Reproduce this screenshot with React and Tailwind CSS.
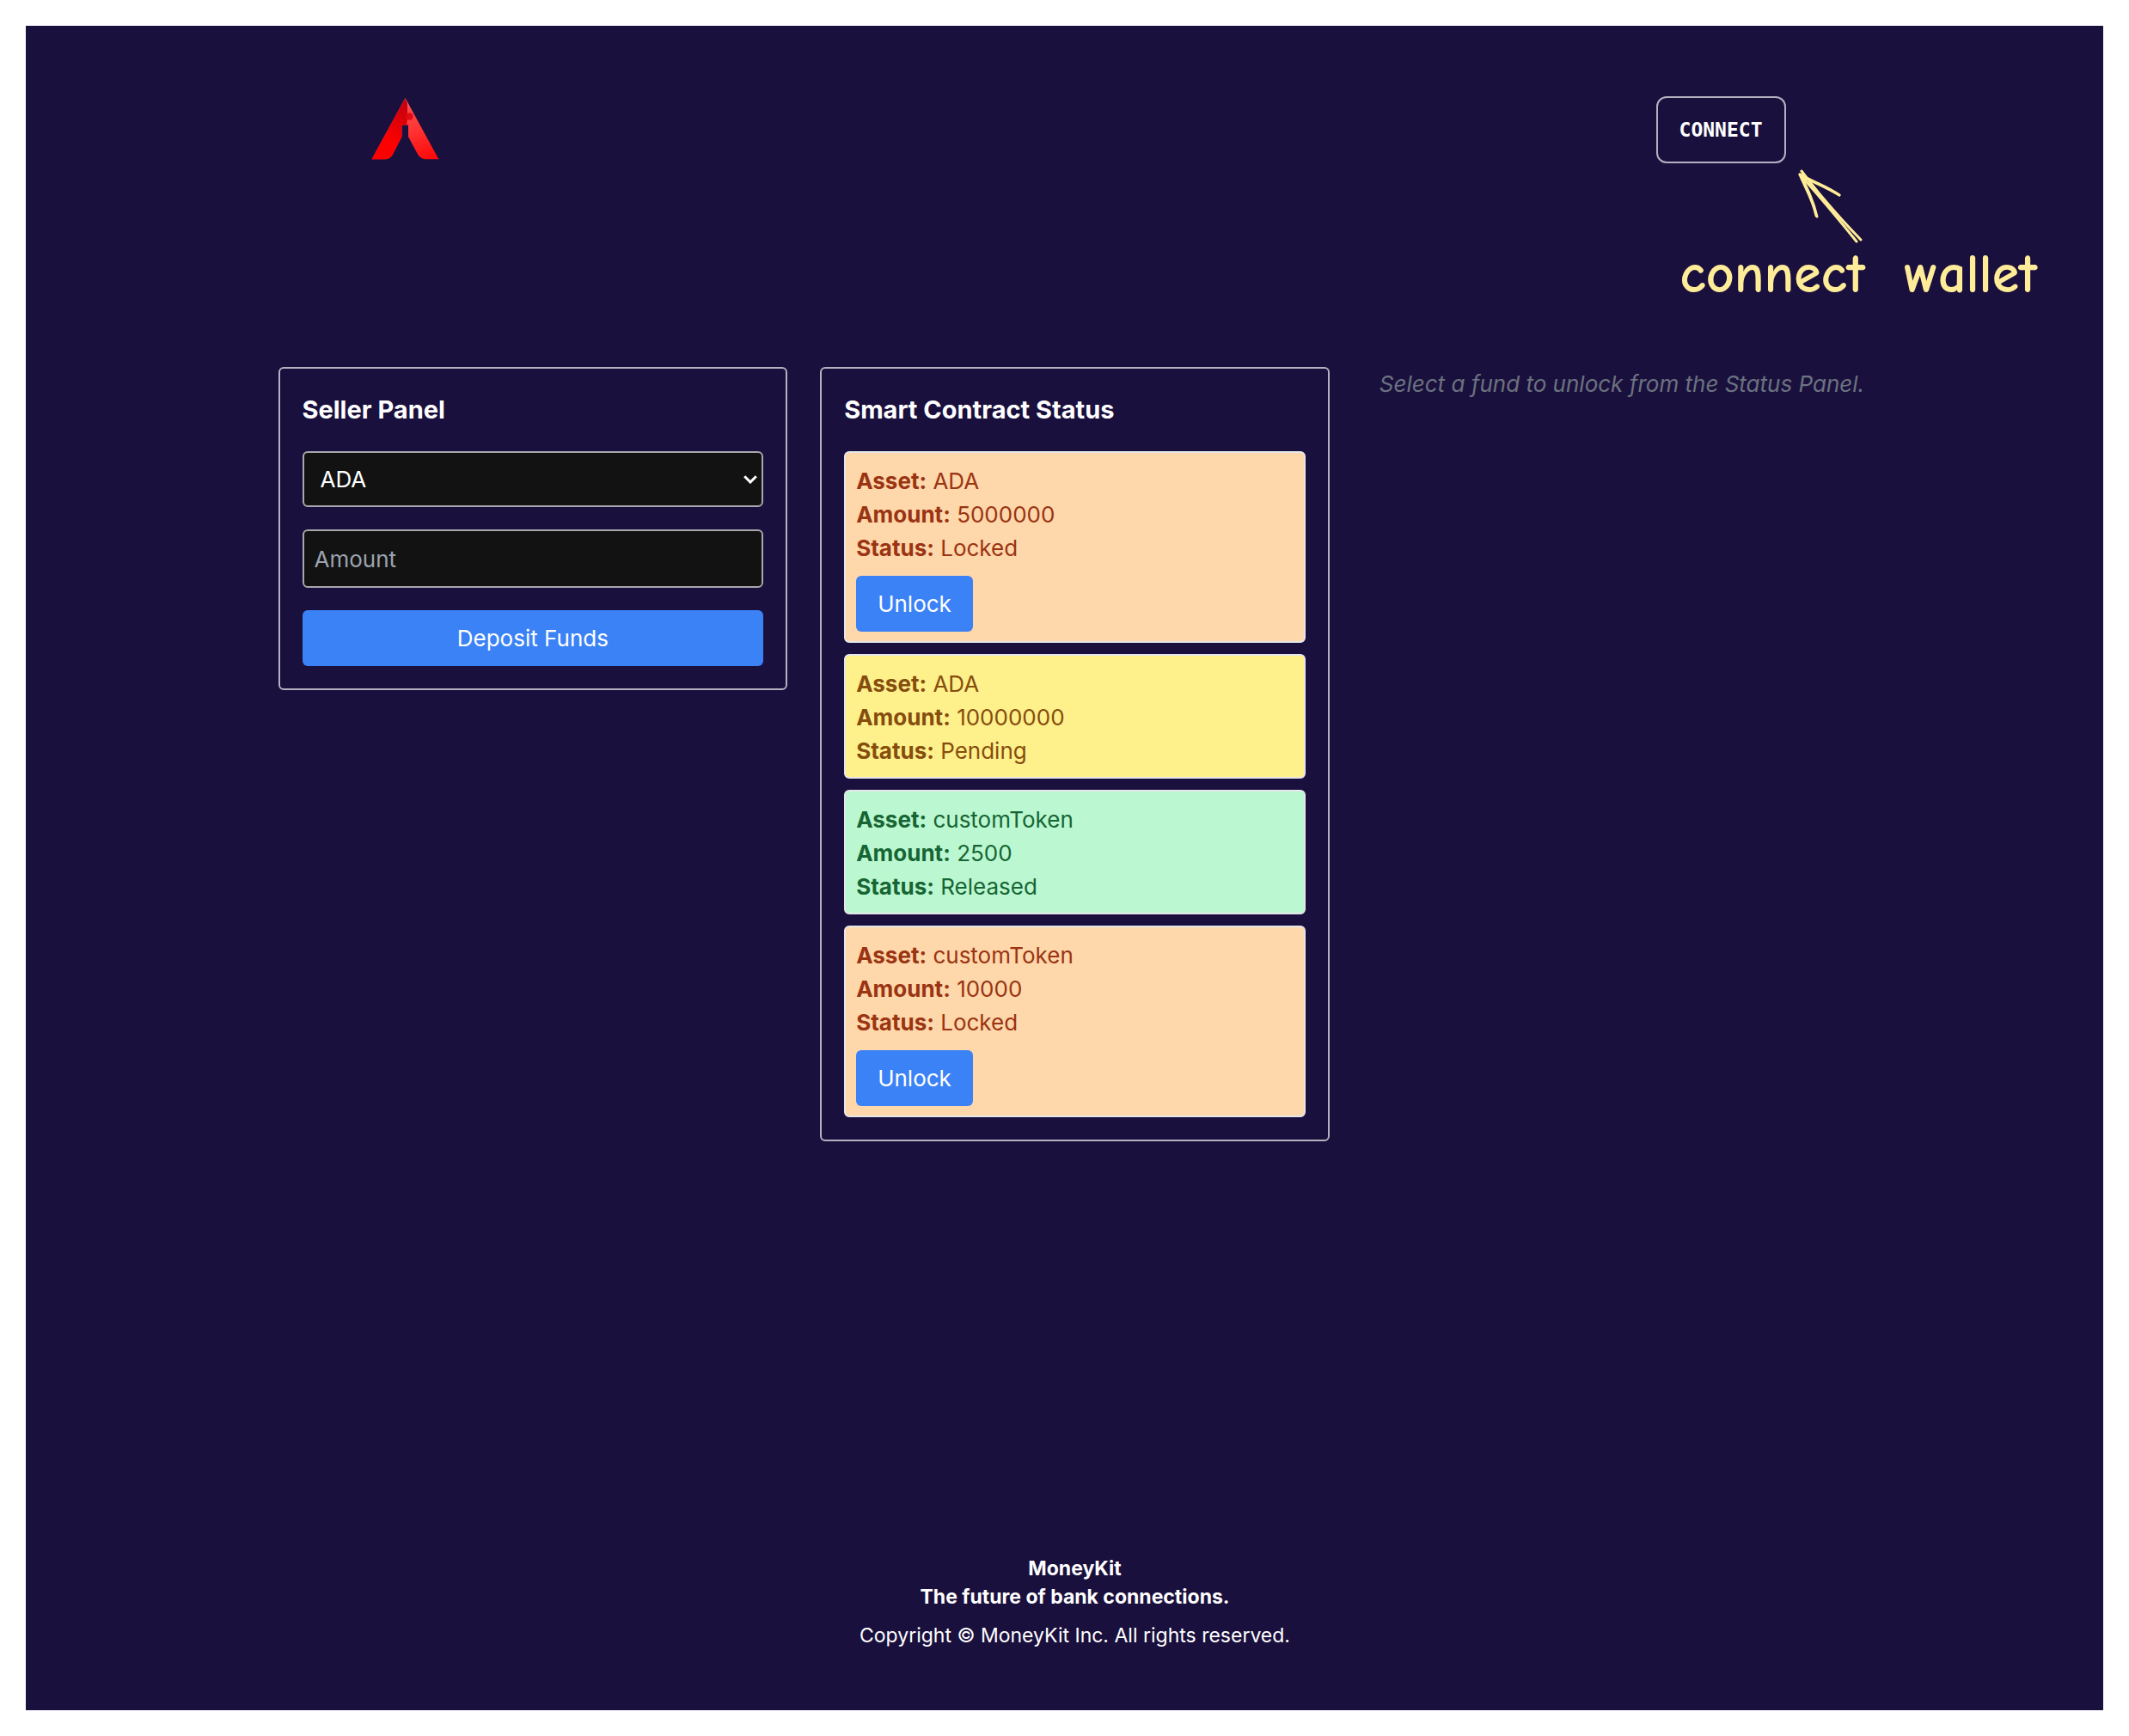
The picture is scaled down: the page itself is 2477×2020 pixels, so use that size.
import React from "react";

const funds = [
  { id: 1, asset: "ADA", amount: 5000000, status: "Locked" },
  { id: 2, asset: "ADA", amount: 10000000, status: "Pending" },
  { id: 3, asset: "customToken", amount: 2500, status: "Released" },
  { id: 4, asset: "customToken", amount: 10000, status: "Locked" },
];

const tones = {
  Locked: "bg-[#fed7aa] text-[#9a3412]",
  Pending: "bg-[#fef08a] text-[#854d0e]",
  Released: "bg-[#bbf7d0] text-[#166534]",
};

function Logo() {
  return (
    <svg viewBox="13 14 79 72" className="h-[72px] w-[79px]" role="img" aria-label="Home">
      <defs>
        <linearGradient id="logoLeft" gradientUnits="userSpaceOnUse" x1="54" y1="18" x2="28" y2="76">
          <stop offset="0" stopColor="#c40012" />
          <stop offset="0.35" stopColor="#dc0008" />
          <stop offset="0.8" stopColor="#ff0000" />
        </linearGradient>
        <linearGradient id="logoRight" gradientUnits="userSpaceOnUse" x1="53" y1="14" x2="80" y2="86">
          <stop offset="0" stopColor="#ff9090" />
          <stop offset="0.16" stopColor="#ff4a4a" />
          <stop offset="0.5" stopColor="#ff3434" />
          <stop offset="1" stopColor="#ff0808" />
        </linearGradient>
      </defs>
      <path
        d="M52.5 14 L13.5 85.3 H29 Q35 85.3 38 79.5 L48.5 59 V45.5 H56 V59 L67 79.5 Q70.5 85.3 77 85.3 H91.5 Z"
        fill="url(#logoRight)"
      />
      <path
        d="M52.5 14 L13.5 85.3 H29 Q35 85.3 38 79.5 L48.5 59 V45.5 H54 L55 39 V20 Z"
        fill="url(#logoLeft)"
      />
      <circle cx="57.5" cy="35.5" r="4.3" fill="#e00c14" />
    </svg>
  );
}

function Arrow() {
  return (
    <svg viewBox="0 0 78 88" className="h-[88px] w-[78px]" fill="none" stroke="#ffec99" strokeWidth="3" strokeLinecap="round" strokeLinejoin="round" aria-hidden="true">
      <path d="M5 3 C24 29 46 54 74 83" />
      <path d="M3 7 C22 28 44 54 69 85" />
      <path d="M3 7 C9 22 18 36 22 55" />
      <path d="M4 8 C12 24 19 38 23 56" />
      <path d="M4 7 C18 16 34 20 49 31" />
      <path d="M6 10 C18 15 34 22 49 31" />
    </svg>
  );
}

function FundCard({ fund }) {
  return (
    <li className={`rounded-md border-2 border-gray-200 px-3 pt-[13px] pb-[11px] ${tones[fund.status]}`}>
      <p><strong>Asset:</strong> {fund.asset}</p>
      <p><strong>Amount:</strong> {fund.amount}</p>
      <p><strong>Status:</strong> {fund.status}</p>
      {fund.status === "Locked" && (
        <button type="button" className="mt-[13px] block h-[65px] rounded-md bg-[#3b82f6] px-[25px] text-white">
          Unlock
        </button>
      )}
    </li>
  );
}

export default function App() {
  return (
    <div className="min-h-screen bg-white p-[30px] font-['Inter',sans-serif]">
      <div className="flex min-h-[calc(100vh-60px)] flex-col bg-[#1a103d] pl-6 text-[26px] leading-[39px] text-white">
        <header className="mx-auto flex w-full max-w-[1854px] items-start justify-between px-[100px] pt-[82px]">
          <a href="#home" className="mt-0.5 ml-2">
            <Logo />
          </a>
          <div className="relative">
            <button
              type="button"
              className="block h-[78px] rounded-xl border-2 border-[#b5b1c1] px-[25px] font-['DejaVu_Sans_Mono',monospace] text-[23px] font-bold"
            >
              CONNECT
            </button>
            <div className="absolute top-[84px] left-[164px]">
              <Arrow />
            </div>
            <p className="absolute top-[171px] left-[28px] font-['Comic_Neue','Comic_Sans_MS','Lato',cursive] text-[64px] leading-[72px] font-bold whitespace-pre text-[#ffec99]">
              {"connect  wallet"}
            </p>
          </div>
        </header>

        <main className="mx-auto mt-[237px] mb-16 grid w-full max-w-[1854px] grid-cols-3 items-start gap-[38px]">
          <section className="rounded-md border-2 border-[#b5b1c1] p-[26px]">
            <h2 className="mb-[26px] text-[29px] leading-[44px] font-bold">Seller Panel</h2>
            <form className="flex flex-col gap-[26px]" onSubmit={(e) => e.preventDefault()}>
              <div className="relative">
                <select
                  aria-label="Asset"
                  className="block h-[65px] w-full appearance-none rounded-md border-2 border-[#a8a8ac] bg-[#121212] px-[19px] text-white"
                >
                  <option>ADA</option>
                  <option>customToken</option>
                </select>
                <svg viewBox="0 0 16 10" className="pointer-events-none absolute top-[28px] right-[7px] h-[10px] w-[16px]" fill="none" stroke="#fff" strokeWidth="3" aria-hidden="true">
                  <path d="M1.2 1.2 L8 8 L14.8 1.2" />
                </svg>
              </div>
              <input
                type="text"
                aria-label="Amount"
                placeholder="Amount"
                className="h-[68px] w-full rounded-md border-2 border-[#a8a8ac] bg-[#121212] px-3 placeholder:text-[#9ca3af]"
              />
              <button type="submit" className="h-[65px] rounded-md bg-[#3b82f6] text-white">
                Deposit Funds
              </button>
            </form>
          </section>

          <section className="rounded-md border-2 border-[#b5b1c1] p-[26px]">
            <h2 className="mb-[26px] text-[29px] leading-[44px] font-bold">Smart Contract Status</h2>
            <ul className="flex flex-col gap-[13px]">
              {funds.map((fund) => (
                <FundCard key={fund.id} fund={fund} />
              ))}
            </ul>
          </section>

          <p className="pl-5 text-[#6b7280] italic">Select a fund to unlock from the Status Panel.</p>
        </main>

        <footer className="mt-auto pb-[70px] text-center text-[23px] leading-[33px]">
          <p className="font-bold">MoneyKit</p>
          <p className="font-bold">The future of bank connections.</p>
          <p className="mt-3">Copyright © MoneyKit Inc. All rights reserved.</p>
        </footer>
      </div>
    </div>
  );
}
